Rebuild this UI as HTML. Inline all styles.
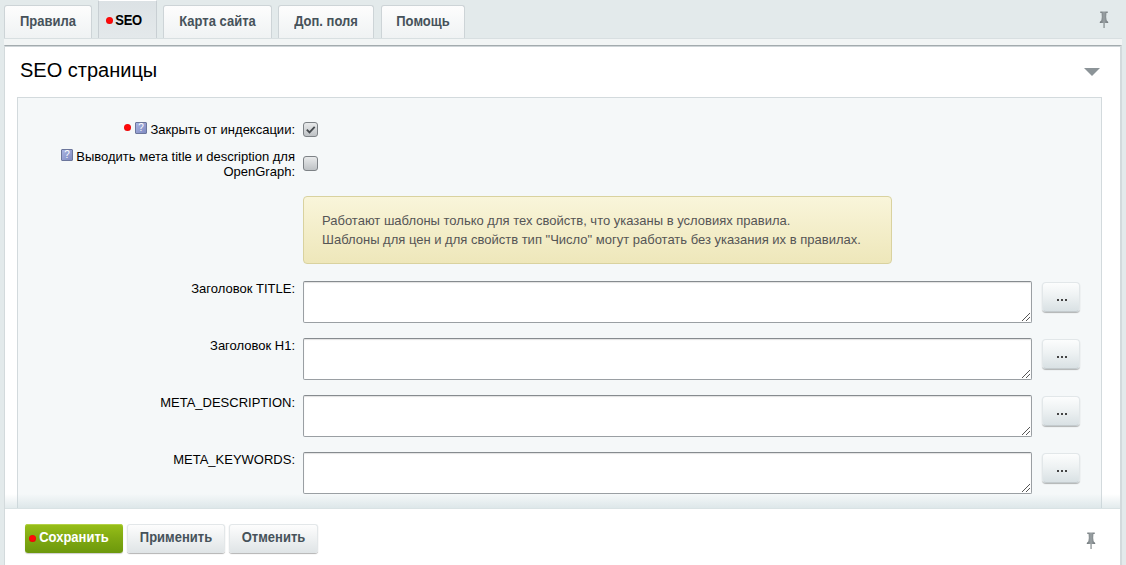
<!DOCTYPE html>
<html><head><meta charset="utf-8">
<style>
*{box-sizing:border-box;margin:0;padding:0}
html,body{width:1126px;height:565px;overflow:hidden}
body{background:#e3eaeb;font-family:"Liberation Sans",sans-serif;position:relative}
.tab{position:absolute;top:5px;height:34px;border:1px solid #cdd4d7;border-bottom:none;border-radius:3px 3px 0 0;
 background:linear-gradient(#fdfdfd,#eff2f3);font-weight:bold;font-size:13px;color:#46525a;text-align:center;line-height:32px}
.tab.act{top:0;height:39px;background:linear-gradient(#dce2e5,#e4e9eb);border-color:#c8cfd3;border-radius:0;border-top:1px solid #fff;color:#000;line-height:42px;padding-left:2px;letter-spacing:-0.4px}
.dot{position:absolute;width:7px;height:7px;border-radius:50%;background:radial-gradient(circle at 50% 45%,#ff0a0a 40%,#d80000 100%)}
.strip{position:absolute;left:4px;top:38px;width:1118px;height:8px;background:#f2f5f5;border-top:1px solid #d8dfe1}
.panel{position:absolute;left:4px;top:45px;width:1118px;height:530px;background:#fff;border-top:1px solid #a3abae;border-left:1px solid #d3dadc;border-right:2px solid #d3dadc;box-shadow:inset 0 1px 0 #cfd5d8}
.title{position:absolute;left:20px;top:59px;font-size:20px;color:#000}
.tri{position:absolute;left:1084px;top:68px;width:0;height:0;border-left:8px solid transparent;border-right:8px solid transparent;border-top:8px solid #8c9498}
.inner{position:absolute;left:17px;top:97px;width:1085px;height:412px;background:#f5f8f9;border:1px solid #d3dadd;border-bottom:none}
.lbl{position:absolute;font-size:13px;color:#000;text-align:right}
.help{position:absolute;width:12px;height:12px;border:1px solid #6b769c;border-radius:1px;background:linear-gradient(135deg,#a9b3e0,#7f8bc2);color:#fff;font-size:10px;line-height:10px;text-align:center}
.cb{position:absolute;width:15px;height:15px;border:1px solid #7d8286;border-radius:3px;background:linear-gradient(#e8eaeb,#bec2c5)}
.note{position:absolute;left:303px;top:196px;width:589px;height:68px;border:1px solid #d9d29f;border-radius:4px;background:linear-gradient(#f9f5da,#eee7ba);font-size:13px;color:#555;line-height:19px;padding:14px 0 0 18px}
.ta{position:absolute;left:303px;width:729px;height:42px;background:#fff;border:1px solid #9a9fa3;border-top-color:#868b8f;border-radius:2px;box-shadow:inset 0 1px 1px rgba(0,0,0,.12)}
.rz{position:absolute;right:1px;bottom:1px;width:9px;height:9px}
.dots{position:absolute;left:1042px;width:38px;height:30px;border-radius:4px;background:linear-gradient(#fcfdfd,#eef2f3 45%,#d9e1e4);box-shadow:0 1px 1px rgba(0,0,0,.28);border:1px solid #e2e7e9;border-bottom-color:#c4cbce}
.dots i{position:absolute;top:16px;width:2px;height:2px;background:#444}
.foot{position:absolute;left:5px;top:508px;width:1115px;height:57px;background:#fff;border-top:1px solid #d9e2e4}
.btn{position:absolute;top:524px;height:29px;border-radius:3px;font-weight:bold;font-size:13px;text-align:center;line-height:26px}
.gray{background:linear-gradient(#fdfdfd,#dfe4e6);color:#46525a;box-shadow:0 1px 1px rgba(0,0,0,.3);border:1px solid #e3e7e9;border-bottom:none}
.st{display:inline-block;transform:scaleY(1.1);transform-origin:50% 75%}
.pin{position:absolute;width:10px;height:17px}
</style></head><body>
<div class="tab" style="left:4px;width:88px"><span class="st">Правила</span></div>
<div class="tab act" style="left:98px;width:59px"><span class="st">SEO</span></div>
<div class="dot" style="left:106px;top:17px"></div>
<div class="tab" style="left:163px;width:109px"><span class="st">Карта сайта</span></div>
<div class="tab" style="left:278px;width:96px"><span class="st">Доп. поля</span></div>
<div class="tab" style="left:381px;width:84px"><span class="st">Помощь</span></div>
<svg class="pin" style="left:1099px;top:11px" viewBox="0 0 10 17"><defs><linearGradient id="pg" x1="0" x2="1"><stop offset="0" stop-color="#6f7679"/><stop offset=".5" stop-color="#9aa1a4"/><stop offset="1" stop-color="#6f7679"/></linearGradient></defs><path d="M1.3 0.6h7.4v1.4h-1.3q-.5 3.5 .2 7.3l1.6 1.6v1.2h-8.4v-1.2l1.6-1.6q.7-3.8 .2-7.3h-1.3z" fill="url(#pg)"/><rect x="4.5" y="12" width="1.1" height="5" fill="#7a8184"/></svg>
<div class="strip"></div>
<div class="panel"></div>
<div class="title">SEO страницы</div>
<div class="tri"></div>
<div class="inner"></div>
<div class="dot" style="left:124px;top:124px"></div>
<div class="help" style="left:135px;top:122px">?</div>
<div class="lbl" style="right:831px;top:122px">Закрыть от индексации:</div>
<div class="cb" style="left:303px;top:122px"><svg width="13" height="13" style="position:absolute;left:0;top:0" viewBox="0 0 13 13"><path d="M2.8 6.6l2.7 2.8 5.2-5.6" fill="none" stroke="#464b4f" stroke-width="1.8"/></svg></div>
<div class="help" style="left:61px;top:149px">?</div>
<div class="lbl" style="right:831px;top:149px;width:260px">Выводить мета title и description для OpenGraph:</div>
<div class="cb" style="left:303px;top:156px"></div>
<div class="note">Работают шаблоны только для тех свойств, что указаны в условиях правила.<br>Шаблоны для цен и для свойств тип "Число" могут работать без указания их в правилах.</div>
<div class="lbl" style="right:831px;top:281px">Заголовок TITLE:</div>
<div class="ta" style="top:281px"><svg class="rz" viewBox="0 0 9 9"><path d="M1 9L9 1M5 9L9 5" stroke="#555" stroke-width="1"/></svg></div>
<div class="dots" style="top:282px"><i style="left:14px"></i><i style="left:18px"></i><i style="left:22px"></i></div>
<div class="lbl" style="right:831px;top:338px">Заголовок H1:</div>
<div class="ta" style="top:338px"><svg class="rz" viewBox="0 0 9 9"><path d="M1 9L9 1M5 9L9 5" stroke="#555" stroke-width="1"/></svg></div>
<div class="dots" style="top:339px"><i style="left:14px"></i><i style="left:18px"></i><i style="left:22px"></i></div>
<div class="lbl" style="right:831px;top:395px">META_DESCRIPTION:</div>
<div class="ta" style="top:395px"><svg class="rz" viewBox="0 0 9 9"><path d="M1 9L9 1M5 9L9 5" stroke="#555" stroke-width="1"/></svg></div>
<div class="dots" style="top:396px"><i style="left:14px"></i><i style="left:18px"></i><i style="left:22px"></i></div>
<div class="lbl" style="right:831px;top:452px">META_KEYWORDS:</div>
<div class="ta" style="top:452px"><svg class="rz" viewBox="0 0 9 9"><path d="M1 9L9 1M5 9L9 5" stroke="#555" stroke-width="1"/></svg></div>
<div class="dots" style="top:453px"><i style="left:14px"></i><i style="left:18px"></i><i style="left:22px"></i></div>
<div style="position:absolute;left:5px;top:494px;width:1115px;height:15px;background:linear-gradient(rgba(195,212,216,0),rgba(195,212,216,.5))"></div>
<div class="foot"></div>
<div class="btn" style="left:25px;width:98px;line-height:28px;background:linear-gradient(#98bf18,#80a912 50%,#6c980c);color:#fff;box-shadow:inset 0 1px 0 #b3d146,0 1px 1px rgba(0,0,0,.2)"><span class="st">Сохранить</span></div>
<div class="dot" style="left:29px;top:535px"></div>
<div class="btn gray" style="left:127px;width:98px"><span class="st">Применить</span></div>
<div class="btn gray" style="left:229px;width:89px"><span class="st">Отменить</span></div>
<svg class="pin" style="left:1086px;top:532px" viewBox="0 0 10 17"><defs><linearGradient id="pg" x1="0" x2="1"><stop offset="0" stop-color="#6f7679"/><stop offset=".5" stop-color="#9aa1a4"/><stop offset="1" stop-color="#6f7679"/></linearGradient></defs><path d="M1.3 0.6h7.4v1.4h-1.3q-.5 3.5 .2 7.3l1.6 1.6v1.2h-8.4v-1.2l1.6-1.6q.7-3.8 .2-7.3h-1.3z" fill="url(#pg)"/><rect x="4.5" y="12" width="1.1" height="5" fill="#7a8184"/></svg>
</body></html>
